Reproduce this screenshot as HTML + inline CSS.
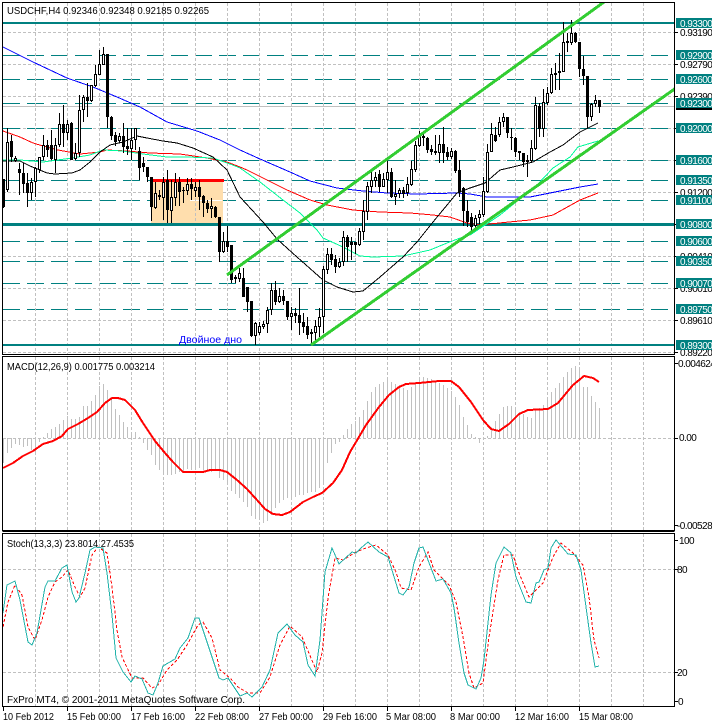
<!DOCTYPE html>
<html><head><meta charset="utf-8"><title>USDCHF,H4</title>
<style>
html,body{margin:0;padding:0;background:#fff;width:712px;height:724px;overflow:hidden}
svg{display:block}
text{font-family:"Liberation Sans",sans-serif;font-size:10px;fill:#000}
.ax text{letter-spacing:-.55px}
.lb text{fill:#fff}
.g{stroke:#c0c0c0;stroke-width:1;stroke-dasharray:3 2;fill:none}
.t{stroke:#008080;stroke-width:1;stroke-dasharray:17 7;fill:none}
.m{fill:none;stroke-width:1}
</style></head><body>
<svg width="712" height="724" viewBox="0 0 712 724" xmlns="http://www.w3.org/2000/svg">
<defs>
<clipPath id="c1"><rect x="3" y="3" width="671" height="351"/></clipPath>
<clipPath id="ax"><rect x="675" y="0" width="37" height="724"/></clipPath>
</defs>
<rect width="712" height="724" fill="#fff"/>

<!-- main chart -->
<g clip-path="url(#c1)" shape-rendering="crispEdges">
<path class="g" d="M3 32.5H674M3 64.5H674M3 96.5H674M3 128.5H674M3 160.5H674M3 192.5H674M3 256.5H674M3 288.5H674M3 320.5H674M3 352.5H674"/>
<path class="t" d="M3 55.5H674M3 79.5H674M3 103.5H674M3 128.5H674M3 160.5H674M3 180.5H674M3 200.5H674M3 241.5H674M3 261.5H674M3 283.5H674M3 309.5H674"/>
<rect x="151" y="180" width="72" height="44" fill="#ffdead"/>
<path d="M190 200.5H222" stroke="#fff" fill="none"/>
<path class="g" d="M35.5 3V354M67.5 3V354M99.5 3V354M131.5 3V354M163.5 3V354M195.5 3V354M227.5 3V354M259.5 3V354M291.5 3V354M323.5 3V354M355.5 3V354M387.5 3V354M419.5 3V354M451.5 3V354M483.5 3V354M515.5 3V354M547.5 3V354M579.5 3V354M611.5 3V354M643.5 3V354"/>
<path d="M3 106.5H674" stroke="#c0c0c0" fill="none"/>
<rect x="3" y="22" width="671" height="2" fill="#008080"/>
<rect x="3" y="223" width="671" height="3" fill="#008080"/>
<rect x="3" y="344" width="671" height="2" fill="#008080"/>
<rect x="153" y="179" width="71" height="3" fill="#f00"/>

<!-- moving averages -->
<polyline class="m" stroke="#0000ff" points="3,47 33,62 67,78 93,87 117,97 140,107 167,122 197,131 220,140 240,150 260,159 290,172 310,181 337,188 363,191 387,193 417,194 457,193 470,194 487,197 530,197 550,193 580,187 598,184"/>
<polyline class="m" stroke="#ff0000" points="3,131 20,137 33,143 43,146 58,150 80,154 100,152 107,150 127,151 150,153 180,154 207,158 227,162 240,167 247,170 263,178 287,190 310,200 327,205 353,210 380,212 410,213 433,215 450,217 467,223 480,225 509,222 530,220 553,215 580,200 598,193"/>
<polyline class="m" stroke="#00fa9a" points="3,160 20,160 43,162 72,158 90,155 103,150 123,151 143,154 167,157 187,157 213,158 230,164 240,168 260,182 283,200 300,213 317,230 323,238 343,247 360,256 373,257 403,256 430,250 447,243 463,237 470,235 500,215 537,185 553,168 570,157 578,147 598,141"/>
<polyline class="m" stroke="#000" points="3,161 20,161 30,166 47,173 55,174 72,173 80,170 90,162 100,152 110,145 123,142 137,136 147,138 163,141 177,143 193,148 213,157 227,170 240,197 263,222 277,239 297,257 323,280 337,287 353,292 363,291 380,277 403,257 417,242 433,222 457,193 470,188 485,183 500,170 513,167 533,162 550,152 563,145 580,132 598,123"/>

<!-- candles -->
<g transform="translate(.5,0)" fill="none">
<path stroke="#000" stroke-width="1" d="M3 179V208M7 128V192M11 135V162M15 156V162M19 163V195M23 163V193M27 173V207M31 178V200M35 167V197M39 157V173M43 135V160M47 140V157M51 130V160M55 138V173M59 113V147M63 105V147M67 120V140M71 122V160M75 143V160M79 95V157M83 95V122M87 83V117M91 85V102M95 65V87M99 50V75M103 47V65M107 54V128M111 116V140M115 132V146M119 133V143M123 123V153M127 128V155M131 128V160M135 128V150M139 147V180M143 157V172M147 167V182M151 177V221M155 182V209M159 190V200M163 177V220M167 170V223M171 180V223M175 173V206M179 177V206M183 187V203M187 178V195M191 178V200M195 182V197M199 180V210M203 195V217M207 200V213M211 198V218M215 206V218M219 217V262M223 232V253M227 226V252M231 245V283M235 275V283M239 268V282M243 268V297M247 287V312M251 301V337M255 322V345M259 322V335M263 321V329M267 307V333M271 283V315M275 281V305M279 288V303M283 290V305M287 301V320M291 307V330M295 308V323M299 288V335M303 313V333M307 317V339M311 329V343M315 320V342M319 308V337M323 266V333M327 248V274M331 248V265M335 255V273M339 258V268M343 231V266M347 235V262M351 237V260M355 242V254M359 228V246M363 200V240M367 182V220M371 169V193M375 172V187M379 170V192M383 173V187M387 159V193M391 168V198M395 180V205M399 188V198M403 187V198M407 177V196M411 161V186M415 141V172M419 131V147M423 132V146M427 137V153M431 145V155M435 135V155M439 135V163M443 127V163M447 147V160M451 148V159M455 150V173M459 160V197M463 187V226M467 200V227M471 213V233M475 215V228M479 210V226M483 177V217M487 144V193M491 123V152M495 127V142M499 117V137M503 113V127M507 117V138M511 128V150M515 137V157M519 151V160M523 153V167M527 155V177M531 140V163M535 97V150M539 103V137M543 89V137M547 87V105M551 68V94M555 63V90M559 53V90M563 22V72M567 33V52M571 20V45M575 32V43M579 42V77M583 56V85M587 76V128M591 103V121M595 95V107M599 100V113"/>
<path stroke="#000" stroke-width="3" d="M3 179V207M7 142V190M11 141V157M15 158V161M19 169V173M23 173V184M27 183V193M31 182V193M35 168V182M39 157V170M43 145V157M47 145V150M51 145V159M55 145V160M59 124V145M63 124V133M67 124V133M71 123V160M75 153V159M79 110V153M83 97V110M87 97V101M91 85V101M95 74V86M99 64V75M103 54V65M107 54V117M111 117V136M115 135V142M119 136V141M123 136V147M127 146V149M131 140V149M135 128V140M139 151V168M143 163V167M147 167V177M151 177V207M155 193V208M159 195V197M163 182V198M167 180V210M171 197V211M175 182V198M179 182V192M183 190V191M187 184V191M191 184V189M195 187V191M199 187V197M203 196V203M207 203V209M211 206V209M215 207V217M219 217V252M223 241V252M227 241V247M231 245V280M235 277V279M239 273V279M243 278V297M247 287V302M251 301V336M255 323V336M259 326V333M263 324V327M267 310V324M271 290V310M275 290V302M279 296V302M283 296V301M287 301V317M291 313V317M295 313V316M299 315V323M303 322V327M307 326V335M311 332V334M315 326V333M319 317V327M323 269V317M327 254V270M331 254V260M335 259V267M339 262V267M343 237V262M347 237V247M351 242V245M355 242V245M359 231V245M363 211V232M367 186V212M371 180V187M375 177V181M379 174V187M383 179V187M387 172V180M391 172V197M395 194V197M399 190V194M403 190V194M407 184V193M411 169V185M415 145V170M419 136V146M423 136V138M427 138V150M431 149V152M435 151V153M439 144V153M443 144V153M447 152V157M451 151V157M455 151V171M459 170V192M463 188V211M467 211V222M471 217V227M475 218V226M479 214V218M483 191V215M487 152V192M491 134V152M495 135V141M499 122V135M503 117V122M507 117V133M511 137V138M515 138V152M519 151V153M523 153V162M527 160V162M531 148V161M535 105V149M539 106V129M543 102V129M547 93V103M551 74V93M555 73V75M559 71V73M563 42V72M567 41V43M571 33V43M575 33V42M579 42V69M583 69V76M587 76V117M591 104V117M595 100V104M599 100V107"/>
<path stroke="#fff" stroke-width="1" d="M7 143V189M15 159V160M31 183V192M35 169V181M39 158V169M43 146V156M55 146V159M59 125V144M67 125V132M75 154V158M79 111V152M83 98V109M91 86V100M95 75V85M99 65V74M103 55V64M119 137V140M131 141V148M135 129V139M155 194V207M163 183V197M171 198V210M175 183V197M187 185V190M195 188V190M211 207V208M223 242V251M235 278V278M239 274V278M255 324V335M259 327V332M263 325V326M267 311V323M271 291V309M279 297V301M291 314V316M311 333V333M315 327V332M319 318V326M323 270V316M327 255V269M339 263V266M343 238V261M359 232V244M363 212V231M367 187V211M371 181V186M375 178V180M383 180V186M387 173V179M395 195V196M399 191V193M407 185V192M411 170V184M415 146V169M419 137V145M439 145V152M451 152V156M475 219V225M479 215V217M483 192V214M487 153V191M491 135V151M499 123V134M503 118V121M531 149V160M535 106V148M543 103V128M547 94V102M551 75V92M555 74V74M563 43V71M571 34V42M591 105V116M595 101V103"/>
</g>

<!-- channel -->
<path d="M227 275L604 2" stroke="#32cd32" stroke-width="3" fill="none"/>
<path d="M311 345L676 88" stroke="#32cd32" stroke-width="3" fill="none"/>
</g>
<text x="179" y="343" fill="#0000ff" style="fill:#0000ff" textLength="63" lengthAdjust="spacingAndGlyphs">Двойное дно</text>

<!-- indicator grids -->
<g shape-rendering="crispEdges">
<path class="g" d="M35.5 357V530M67.5 357V530M99.5 357V530M131.5 357V530M163.5 357V530M195.5 357V530M227.5 357V530M259.5 357V530M291.5 357V530M323.5 357V530M355.5 357V530M387.5 357V530M419.5 357V530M451.5 357V530M483.5 357V530M515.5 357V530M547.5 357V530M579.5 357V530M611.5 357V530M643.5 357V530"/>
<path class="g" d="M3 438.5H674"/>
<path class="g" d="M35.5 534V706M67.5 534V706M99.5 534V706M131.5 534V706M163.5 534V706M195.5 534V706M227.5 534V706M259.5 534V706M291.5 534V706M323.5 534V706M355.5 534V706M387.5 534V706M419.5 534V706M451.5 534V706M483.5 534V706M515.5 534V706M547.5 534V706M579.5 534V706M611.5 534V706M643.5 534V706"/>
<path class="g" d="M3 569.5H674M3 672.5H674"/>

<!-- MACD histogram -->
<g transform="translate(.5,0)">
<path fill="none" stroke="#c0c0c0" stroke-width="1" d="M3 438V463M7 438V453M11 438V448M15 438V444M19 438V445M23 438V447M27 438V446M31 438V450M35 438V452M39 438V442M43 438V437M47 438V433M51 438V429M55 438V427M59 438V424M63 438V420M67 438V416M71 438V419M75 438V419M79 438V417M83 438V406M87 438V406M91 438V401M95 438V395M99 438V386M103 438V384M107 438V390M111 438V398M115 438V409M119 438V415M123 438V422M127 438V427M131 438V432M135 438V432M139 438V437M143 438V443M147 438V450M151 438V455M155 438V465M159 438V470M163 438V473M167 438V475M171 438V475M175 438V474M179 438V472M183 438V471M187 438V469M191 438V470M195 438V470M199 438V468M203 438V470M207 438V470M211 438V472M215 438V470M219 438V478M223 438V480M227 438V485M231 438V491M235 438V494M239 438V498M243 438V502M247 438V507M251 438V516M255 438V519M259 438V520M263 438V523M267 438V521M271 438V515M275 438V508M279 438V503M283 438V500M287 438V498M291 438V497M295 438V497M299 438V495M303 438V495M307 438V493M311 438V492M315 438V492M319 438V488M323 438V482M327 438V463M331 438V453M335 438V444M339 438V442M343 438V435M347 438V429M351 438V424M355 438V421M359 438V417M363 438V410M367 438V401M371 438V392M375 438V387M379 438V384M383 438V382M387 438V379M391 438V382M395 438V384M399 438V385M403 438V388M407 438V390M411 438V387M415 438V383M419 438V380M423 438V377M427 438V378M431 438V379M435 438V382M439 438V383M443 438V385M447 438V388M451 438V391M455 438V397M459 438V405M463 438V417M467 438V425M471 438V434M475 438V437M479 438V443M483 438V439M487 438V436M491 438V427M495 438V421M499 438V414M503 438V407M507 438V406M511 438V406M515 438V410M519 438V412M523 438V414M527 438V417M531 438V418M535 438V410M539 438V408M543 438V405M547 438V398M551 438V392M555 438V388M559 438V383M563 438V377M567 438V372M571 438V368M575 438V366M579 438V368M583 438V387M587 438V387M591 438V396M595 438V402M599 438V408"/>
</g>
<polyline fill="none" stroke="#f00" stroke-width="2" points="3,468 13,463 23,456 33,451 43,444 53,441 62,436 68,429 78,424 88,418 97,412 105,403 112,398 118,398 125,400 135,410 143,423 155,441 165,453 173,462 183,472 203,472 210,470 220,470 227,472 237,480 247,489 257,500 265,509 273,514 282,515 290,512 303,502 313,497 322,493 333,483 342,470 350,452 356,442 366,425 379,407 389,395 399,387 406,384 419,383 439,381 451,381 459,387 471,402 483,420 491,429 499,431 509,424 519,414 528,410 548,409 558,403 573,385 584,376 593,378 599,382"/>

<!-- Stochastic -->
<polyline fill="none" stroke="#f00" stroke-width="1" stroke-dasharray="3 2" points="3,627 8,602 15,585 22,595 28,627 35,640 42,620 48,597 55,582 62,577 68,570 75,587 80,597 85,588 92,555 98,547 107,553 112,587 117,630 122,657 132,678 143,678 152,688 158,685 167,670 177,660 187,645 198,625 203,622 212,638 220,670 230,678 238,687 248,693 260,693 270,677 280,645 290,626 302,637 317,672 322,653 328,598 335,558 343,560 356,552 366,548 376,545 388,555 396,572 401,588 411,590 419,567 428,552 434,570 449,585 456,602 463,637 469,673 474,688 483,683 489,637 498,580 504,555 513,555 519,573 529,597 543,583 553,557 561,543 573,553 583,565 589,597 594,640 599,658"/>
<polyline fill="none" stroke="#20b2aa" stroke-width="1" points="3,613 7,585 15,581 20,600 28,642 32,645 37,633 45,587 48,581 55,581 62,568 67,565 72,592 76,602 79,598 85,573 90,550 95,547 103,548 107,573 112,615 116,658 123,672 131,682 135,676 142,679 148,693 153,695 158,683 163,666 175,659 180,648 188,638 195,618 199,618 208,645 219,678 223,680 228,678 240,696 247,693 252,697 262,687 270,670 278,633 287,624 295,635 303,642 308,665 315,676 320,640 325,572 332,548 339,564 352,552 356,553 361,548 368,542 379,552 388,557 399,593 403,595 409,587 414,563 419,548 423,547 436,581 443,579 451,593 454,608 459,643 464,673 468,685 476,689 481,678 484,660 491,595 496,563 504,547 511,553 516,577 526,602 531,603 536,583 539,582 544,570 548,568 551,548 556,540 568,554 576,555 581,570 586,607 591,643 595,667 599,666"/>

<!-- frames -->
<path fill="none" stroke="#000" stroke-width="1" d="M2.5 2.5H674.5V354.5H2.5ZM2.5 356.5H674.5V530.5H2.5ZM2.5 533.5H674.5V706.5H2.5Z"/>
<path fill="none" stroke="#000" stroke-width="1" d="M2.5 531.5H674.5M675 32.5h3M675 64.5h3M675 96.5h3M675 128.5h3M675 160.5h3M675 192.5h3M675 224.5h3M675 256.5h3M675 288.5h3M675 320.5h3M675 352.5h3M675 363.5h3M675 438.5h3M675 525.5h3M675 540.5h3M675 569.5h3M675 672.5h3M675 701.5h3M3.5 707V711M67.5 707V711M131.5 707V711M195.5 707V711M259.5 707V711M323.5 707V711M387.5 707V711M451.5 707V711M515.5 707V711M579.5 707V711"/>
</g>

<!-- titles -->
<text x="7" y="14" textLength="202" lengthAdjust="spacingAndGlyphs">USDCHF,H4  0.92346 0.92348 0.92185 0.92265</text>
<text x="7" y="370" textLength="148" lengthAdjust="spacingAndGlyphs">MACD(12,26,9) 0.001775 0.003214</text>
<text x="7" y="547" textLength="127" lengthAdjust="spacingAndGlyphs">Stoch(13,3,3) 23.8014 27.4535</text>
<text x="7" y="703" textLength="238" lengthAdjust="spacingAndGlyphs">FxPro MT4, © 2001-2011 MetaQuotes Software Corp.</text>

<!-- axis labels -->
<g clip-path="url(#ax)" class="ax">
<text x="680" y="36">0.93190</text>
<text x="680" y="68">0.92790</text>
<text x="680" y="100">0.92390</text>
<text x="680" y="196">0.91200</text>
<text x="680" y="260">0.90410</text>
<text x="680" y="292">0.90010</text>
<text x="680" y="324">0.89610</text>
<text x="680" y="356">0.89220</text>
<rect x="676" y="102" width="36" height="8" fill="#000"/>
<g fill="#008080" shape-rendering="crispEdges">
<rect x="676" y="18" width="36" height="10"/><rect x="676" y="50" width="36" height="10"/><rect x="676" y="74" width="36" height="10"/><rect x="676" y="98" width="36" height="10"/><rect x="676" y="123" width="36" height="10"/><rect x="676" y="155" width="36" height="10"/><rect x="676" y="175" width="36" height="10"/><rect x="676" y="195" width="36" height="10"/><rect x="676" y="219" width="36" height="10"/><rect x="676" y="236" width="36" height="10"/><rect x="676" y="256" width="36" height="10"/><rect x="676" y="278" width="36" height="10"/><rect x="676" y="304" width="36" height="10"/><rect x="676" y="340" width="36" height="10"/>
</g>
<g class="lb">
<text x="680" y="27">0.93300</text><text x="680" y="59">0.92900</text><text x="680" y="83">0.92600</text><text x="680" y="107">0.92300</text><text x="680" y="132">0.92000</text><text x="680" y="164">0.91600</text><text x="680" y="184">0.91350</text><text x="680" y="204">0.91100</text><text x="680" y="228">0.90800</text><text x="680" y="245">0.90600</text><text x="680" y="265">0.90350</text><text x="680" y="287">0.90070</text><text x="680" y="313">0.89750</text><text x="680" y="349">0.89300</text>
</g>
<text x="678" y="367">0.004624</text>
<text x="679" y="441">0.00</text>
<text x="677" y="529">-0.00528</text>
<text x="679" y="544">100</text>
<text x="677" y="573">80</text>
<text x="677" y="676">20</text>
<text x="678" y="705">0</text>
</g>

<!-- time axis -->
<text x="3" y="720" textLength="51" lengthAdjust="spacingAndGlyphs">10 Feb 2012</text>
<text x="67" y="720" textLength="54" lengthAdjust="spacingAndGlyphs">15 Feb 00:00</text>
<text x="131" y="720" textLength="54" lengthAdjust="spacingAndGlyphs">17 Feb 16:00</text>
<text x="195" y="720" textLength="54" lengthAdjust="spacingAndGlyphs">22 Feb 08:00</text>
<text x="259" y="720" textLength="54" lengthAdjust="spacingAndGlyphs">27 Feb 00:00</text>
<text x="323" y="720" textLength="54" lengthAdjust="spacingAndGlyphs">29 Feb 16:00</text>
<text x="386" y="720" textLength="50" lengthAdjust="spacingAndGlyphs">5 Mar 08:00</text>
<text x="450" y="720" textLength="50" lengthAdjust="spacingAndGlyphs">8 Mar 00:00</text>
<text x="515" y="720" textLength="54" lengthAdjust="spacingAndGlyphs">12 Mar 16:00</text>
<text x="579" y="720" textLength="54" lengthAdjust="spacingAndGlyphs">15 Mar 08:00</text>
</svg>
</body></html>
